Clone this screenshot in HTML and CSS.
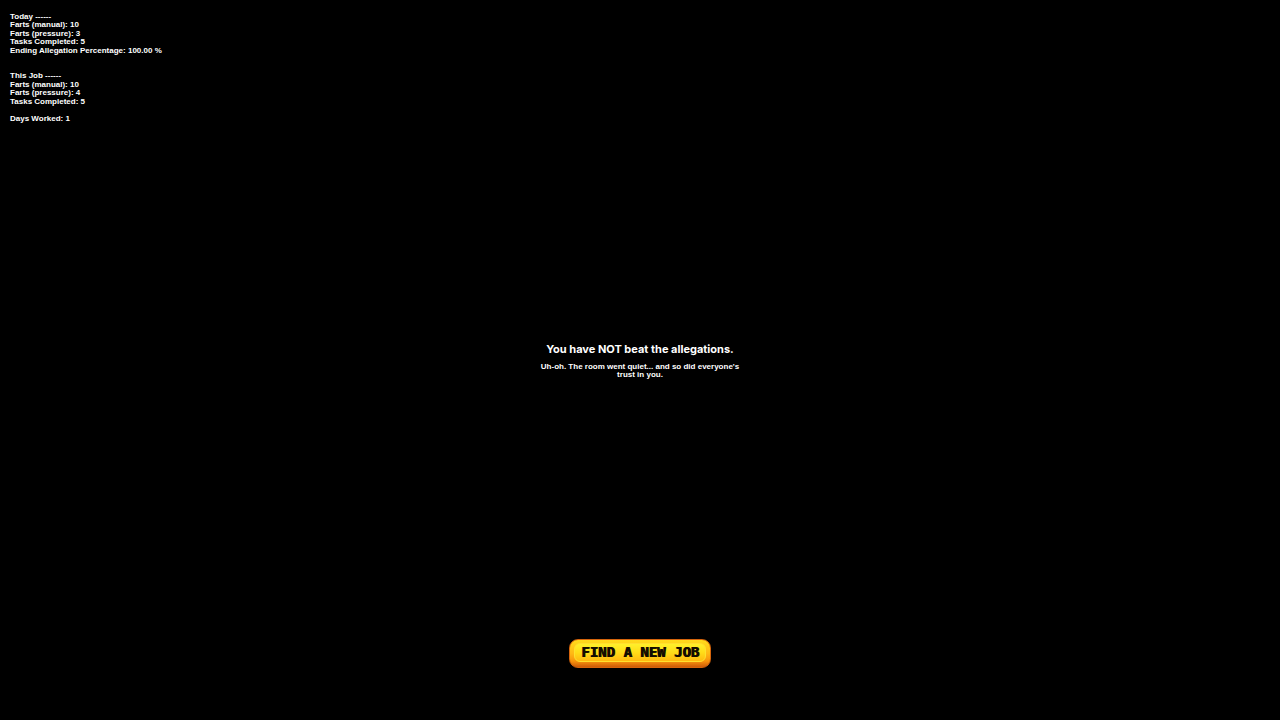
FILE: index.html
```html
<!DOCTYPE html>
<html lang="en">
<head>
    <meta charset="UTF-8">
    <meta name="viewport" content="width=device-width, initial-scale=1.0">
    <title>Game Over</title>
    <link rel="stylesheet" href="styles.css">
</head>
<body>

<div class="screen">
    <!-- Stats for the day and the whole job -->
    <div class="stats">
        <p class="stats-group">
            Today ------<br>
            Farts (manual): 10<br>
            Farts (pressure): 3<br>
            Tasks Completed: 5<br>
            Ending Allegation Percentage: 100.00 %
        </p>
        <p class="stats-group job">
            This Job ------<br>
            Farts (manual): 10<br>
            Farts (pressure): 4<br>
            Tasks Completed: 5
        </p>
        <p class="stats-group">Days Worked: 1</p>
    </div>

    <div class="result">
        <h1>You have NOT beat the allegations.</h1>
        <p class="message">Uh-oh. The room went quiet... and so did everyone's trust in you.</p>
    </div>

    <div class="actions">
        <button type="button" class="job-button"><span class="face">FIND A NEW JOB</span></button>
    </div>
</div>

</body>
</html>
```
FILE: styles.css
```css
body {
    margin: 0;
    background-color: #000;
    color: #fff;
    font-family: "Liberation Sans", Arial, sans-serif;
    font-size: 8px;
    font-weight: 700;
    line-height: 1.06;
}

h1,
p {
    margin: 0;
}

/* Equal top and bottom rows keep the result in the middle */
.screen {
    display: grid;
    grid-template-rows: 1fr auto 1fr;
    min-height: 100vh;
    padding: 13px 10px 52px;
    box-sizing: border-box;
}

.stats-group {
    margin-bottom: 1.06em;
}

/* Extra blank line before the job totals */
.job {
    margin-top: 2.12em;
}

.result {
    width: 206px;
    margin: 41px auto 0;
    text-align: center;
}

h1 {
    margin-bottom: 7px;
    font-family: Inter, sans-serif;
    font-size: 11px;
    font-weight: 700;
    line-height: 13px;
    white-space: nowrap;
}

.actions {
    display: flex;
    align-items: flex-end;
    justify-content: center;
}

.job-button {
    padding: 3px 4px 5px;
    border: 1px solid #d4640c;
    border-radius: 9px;
    background: linear-gradient(#ffdc1c, #ffb814 50%, #f8940c 78%, #cc5a08);
    color: #140c00;
    cursor: pointer;
}

/* Bright inner plate with its lit rim */
.face {
    display: block;
    padding: 0 6px 1px;
    border: 1px solid #ffe02e;
    border-radius: 6px;
    background: linear-gradient(#fff02a, #ffdc18 50%, #ffba10);
    font-family: "DejaVu Sans Mono", monospace;
    font-size: 14px;
    font-weight: 700;
    line-height: 16px;
    white-space: nowrap;
    text-shadow: 1px 0 #140c00;
}

.job-button:hover {
    filter: brightness(1.1);
}
```
